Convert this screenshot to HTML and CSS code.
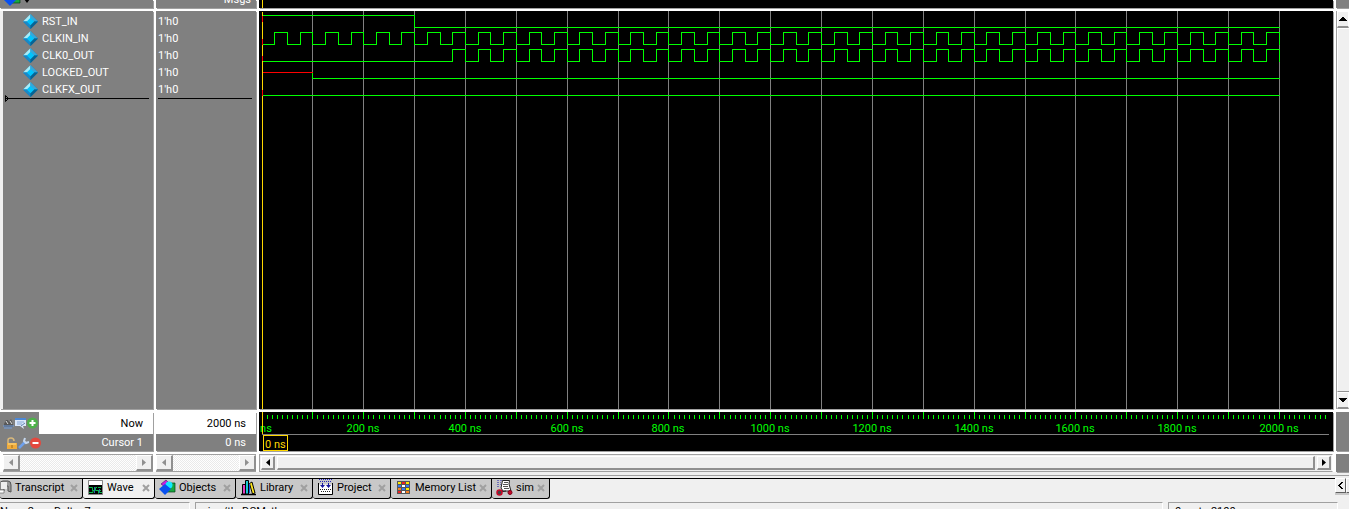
FILE: index.html
```html
<!DOCTYPE html>
<html lang="en">
<head>
<meta charset="utf-8">
<title>Wave</title>
<link rel="stylesheet" href="styles.css">
</head>
<body>
<svg class="defs" aria-hidden="true">
  <symbol id="gem" viewBox="0 0 16 16">
    <path d="M8 0L0 8L8 16L16 8Z" fill="#0b76ae"/>
    <path d="M8 0L0 8L8 8Z" fill="#a8ecf8"/><path d="M8 0L16 8L8 8Z" fill="#35a8da"/>
    <path d="M0 8L8 16L8 8Z" fill="#1889c8"/><path d="M16 8L8 16L8 8Z" fill="#066494"/>
    <path d="M8 4L12 8L8 12L4 8Z" fill="#00c4fc"/>
  </symbol>
  <symbol id="objects" viewBox="0 0 17 17">
    <path d="M2 5L7 1L10 4L6 8Z" fill="#c81ee0" stroke="#402060" stroke-width=".6"/>
    <path d="M9 4H16V13H7Z" fill="#18a840" stroke="#064018" stroke-width=".7"/>
    <circle cx="10" cy="6" r="3.500" fill="#10e8ff"/><path d="M6 5L12 10L6 16L0 10Z" fill="#0850f0"/>
  </symbol>
</svg>
<main class="app">
  <section class="wave-window" aria-label="Wave">
    <div class="cell head head-names">
      <svg class="icon17"><use href="#objects"/></svg>
      <svg class="caret" viewBox="0 0 6 4"><path d="M0 0H6L3 4Z"/></svg>
    </div>
    <div class="cell head head-msgs">Msgs</div>
    <div class="cell black head"><svg class="plot"><path class="cursor" d="M3 0V8"/></svg></div>
    <div class="cell head"></div>

    <div class="cell names">
      <ul class="signals">
        <li><svg class="gem"><use href="#gem"/></svg>RST_IN</li>
        <li><svg class="gem"><use href="#gem"/></svg>CLKIN_IN</li>
        <li><svg class="gem"><use href="#gem"/></svg>CLK0_OUT</li>
        <li><svg class="gem"><use href="#gem"/></svg>LOCKED_OUT</li>
        <li><svg class="gem"><use href="#gem"/></svg>CLKFX_OUT</li>
      </ul>
      <div class="insert"><svg viewBox="0 0 4 7"><path d="M.5 .5L3.500 3.500L.5 6.500Z" fill="none" stroke="#000"/></svg></div>
    </div>
    <div class="cell values">
      <ul class="signals"><li>1'h0</li><li>1'h0</li><li>1'h0</li><li>1'h0</li><li>1'h0</li></ul>
      <div class="insert"></div>
    </div>
    <div class="cell black"><svg class="plot" id="waves" role="img" aria-label="Waveforms"></svg></div>
    <div class="vscroll">
      <button aria-label="Scroll up"><svg viewBox="0 0 8 4"><path d="M3 0H5V1H6V2H7V3H8V4H0V3H1V2H2V1H3Z"/></svg></button>
      <div class="vtrack"></div>
      <button aria-label="Scroll down"><svg viewBox="0 0 8 4"><path d="M0 0H8V1H7V2H6V3H5V4H3V3H2V2H1V1H0Z"/></svg></button>
    </div>

    <div class="cell info">
      <div class="now">
        <div class="tools">
          <svg viewBox="0 0 11 12"><path d="M1 7L3 3H5L6 5L8 2L10 7V10H1Z" fill="#585858"/><path d="M0 9H11M1 11H9" stroke="#6f9de0"/><path d="M3 4L5 7M7 4L9 7" stroke="#ddd"/></svg>
          <svg viewBox="0 0 11 12"><path d="M0 1H11V9H8L9 12L5 9H0Z" fill="#dce8fa"/><path d="M0 2H11" stroke="#4d88d5" stroke-width="2"/><path d="M2 5H9M2 7H7" stroke="#86a8d8"/><path d="M6 9L10 6" stroke="#607fae"/></svg>
          <svg viewBox="0 0 11 12"><circle cx="5.500" cy="6" r="5.500" fill="#4eb04a"/><path d="M5.500 3V9M2.500 6H8.500" stroke="#fff" stroke-width="2"/></svg>
        </div>
        <span>Now</span>
      </div>
      <div class="curs">
        <div class="tools">
          <svg viewBox="0 0 11 12"><path d="M2 6V3Q2 1 5 1Q8 1 8 4" fill="none" stroke="#d8b87c" stroke-width="1.500"/><path d="M1 6H11V12H1Z" fill="#efac3d"/><path d="M2 7H10" stroke="#ffda86"/><path d="M6 8V11" stroke="#a46910"/></svg>
          <svg viewBox="0 0 11 12"><path d="M1 11L7 5" stroke="#6d9fea" stroke-width="2.500"/><path d="M7 1L6 4L8 6L11 5" fill="none" stroke="#c5d7ee" stroke-width="2"/></svg>
          <svg viewBox="0 0 11 12"><circle cx="5.500" cy="6" r="5.500" fill="#e3483e"/><path d="M2.500 6H8.500" stroke="#fff" stroke-width="2"/></svg>
        </div>
        <span>Cursor 1</span>
      </div>
    </div>
    <div class="cell info"><div class="now"><span>2000 ns</span></div><div class="curs"><span>0 ns</span></div></div>
    <div class="cell black"><svg class="plot" id="ruler" role="img" aria-label="Time ruler"></svg></div>
    <div class="cell"></div>

    <div class="hscroll off pad">
      <button disabled aria-label="Names left"><svg viewBox="0 0 4 7"><path d="M4 0V7L0 3.500Z"/></svg></button><div class="track"></div><button disabled aria-label="Names right"><svg viewBox="0 0 4 7"><path d="M0 0V7L4 3.500Z"/></svg></button>
    </div>
    <div class="hscroll off">
      <button disabled aria-label="Values left"><svg viewBox="0 0 4 7"><path d="M4 0V7L0 3.500Z"/></svg></button><div class="track"></div><button disabled aria-label="Values right"><svg viewBox="0 0 4 7"><path d="M0 0V7L4 3.500Z"/></svg></button>
    </div>
    <div class="hscroll">
      <button aria-label="Wave left"><svg viewBox="0 0 4 7"><path d="M4 0V7L0 3.500Z"/></svg></button><div class="thumb"></div><button aria-label="Wave right"><svg viewBox="0 0 4 7"><path d="M0 0V7L4 3.500Z"/></svg></button>
    </div>
    <div class="cell"></div>
  </section>

  <div class="tabbar">
    <nav class="tabs">
      <div class="tab t-transcript"><svg class="icon17" viewBox="0 0 17 17"><path d="M5 5Q5 2 8 2H13Q16 2 16 6V13L13 12V7H9V12H5Z" fill="#999" stroke="#555"/><path d="M6 3H12V10H6Z" fill="#eee"/><path d="M5 3V12" stroke="#888" stroke-width="2"/><path d="M3 11H9V14H3Z" fill="#fff" stroke="#555" stroke-width=".6"/></svg><button class="name">Transcript</button><button class="x" aria-label="Close Transcript"><svg viewBox="0 0 8 8"><path d="M1 1L7 7M7 1L1 7"/></svg></button></div>
      <div class="tab t-wave on"><svg class="icon17" viewBox="0 0 17 17"><path d="M1.500 1.500H15.500V15.500H1.500Z" fill="#000" stroke="#888"/><path d="M2 2H15V6H2Z" fill="#fff"/><path d="M2 8.500H5.500V11.500H8.500V8.500H10M11 8.500H14M9 11.500H14M2 13.500H6V11.500M9 11.500H11.500V14.500M12 13.500H15" fill="none" stroke="#08b848"/><path d="M7.500 8V14M12.500 10V14" stroke="#2868a8"/></svg><button class="name">Wave</button><button class="x" aria-label="Close Wave"><svg viewBox="0 0 8 8"><path d="M1 1L7 7M7 1L1 7"/></svg></button></div>
      <div class="tab t-objects"><svg class="icon17"><use href="#objects"/></svg><button class="name">Objects</button><button class="x" aria-label="Close Objects"><svg viewBox="0 0 8 8"><path d="M1 1L7 7M7 1L1 7"/></svg></button></div>
      <div class="tab t-library"><svg class="icon17" viewBox="0 0 17 17"><path d="M1 15.500H16" stroke="#000" stroke-width="1.500"/><path d="M2.500 5.500H5.500V15H2.500Z" fill="#e040c0" stroke="#000"/><path d="M5.500 1.500H8.500V15H5.500Z" fill="#18c8d0" stroke="#000"/><path d="M9.500 4.500L12 3L15 14L12.500 15Z" fill="#ffe820" stroke="#000"/><path d="M9.500 5V14" stroke="#2050e0"/></svg><button class="name">Library</button><button class="x" aria-label="Close Library"><svg viewBox="0 0 8 8"><path d="M1 1L7 7M7 1L1 7"/></svg></button></div>
      <div class="tab t-project"><svg class="icon17" viewBox="0 0 17 17"><path d="M2 5.500H15V15H2Z" fill="#fff"/><path d="M2 .5H15M3 2.500H14" stroke="#2828b8" stroke-dasharray="1 1"/><path d="M1.500 4V15.500H15.500V4" fill="none" stroke="#000"/><path d="M3 6H5V4H6V6H8L5.500 9ZM9 6H11V4H12V6H14L11.500 9Z" fill="#18189c"/><path d="M3 10.500H14M4 12.500H13" stroke="#222" stroke-dasharray="1 1"/></svg><button class="name">Project</button><button class="x" aria-label="Close Project"><svg viewBox="0 0 8 8"><path d="M1 1L7 7M7 1L1 7"/></svg></button></div>
      <div class="tab t-memory"><svg class="icon17" viewBox="0 0 17 17"><path d="M2 2H15V15H2Z" fill="#555"/><path d="M3 3H6V5H3ZM11 3H14V5H11ZM11 9H14V11H11Z" fill="#ffe800"/><path d="M7 3H10V5H7ZM3 12H6V14H3Z" fill="#f02020"/><path d="M3 6H6V8H3ZM11 6H14V8H11ZM7 9H10V11H7Z" fill="#3878f0"/><path d="M7 6H10V8H7ZM7 12H10V14H7Z" fill="#fff"/><path d="M3 9H6V11H3ZM11 12H14V14H11Z" fill="#f88020"/></svg><button class="name">Memory List</button><button class="x" aria-label="Close Memory List"><svg viewBox="0 0 8 8"><path d="M1 1L7 7M7 1L1 7"/></svg></button></div>
      <div class="tab t-sim"><svg class="icon17" viewBox="0 0 17 17"><path d="M6.500 1.500H13.500L13 5L15 12H7L5 9Z" fill="#fff" stroke="#222"/><path d="M8 3.500H12M7 5.500H12M7 7.500H12M8 9.500H13" stroke="#555"/><path d="M1 1.500H6M1 3.500H5M1 5.500H5M1 7.500H4" stroke="#7070b8" stroke-dasharray="2 1"/><path d="M4 13L10 12" stroke="#222"/><circle cx="3.500" cy="13.500" r="2.500" fill="#444" stroke="#c80828" stroke-width="1.500"/><circle cx="14" cy="13.500" r="2" fill="#c80828" stroke="#800018"/></svg><button class="name">sim</button><button class="x" aria-label="Close sim"><svg viewBox="0 0 8 8"><path d="M1 1L7 7M7 1L1 7"/></svg></button></div>
    </nav>
    <div class="tabnav">
      <button aria-label="Previous tabs"><svg viewBox="0 0 5 7"><path d="M3 0H5V1H3ZM2 1H4V2H2ZM1 2H3V3H1ZM0 3H2V4H0ZM1 4H3V5H1ZM2 5H4V6H2ZM3 6H5V7H3Z"/></svg></button>
      <button aria-label="Next tabs"></button>
    </div>
  </div>
  <footer class="status">
    <div class="s-now">Now: 2 us&nbsp; Delta: 7</div>
    <div class="s-path">sim:/tb_DCM_tb</div>
    <div class="s-range">0 ns to 2100 ns</div>
  </footer>
</main>
<script src="wave.js"></script>
</body>
</html>
```
FILE: styles.css
```css
* { box-sizing: border-box; }
body { margin: 0; background: #f0f0f0; color: #000; font: 11px/17px Tahoma, Roboto, "Noto Sans", sans-serif; }
button { font: inherit; color: inherit; padding: 0; border: 0; background: none; }
ul { margin: 0; padding: 0; list-style: none; }
svg { display: block; }
.defs { width: 0; height: 0; position: absolute; }
.app { height: 100vh; display: flex; flex-direction: column; overflow: hidden; }

.wave-window {
  flex: 1; min-height: 0; display: grid; gap: 3px; background: #fff;
  grid-template-columns: 153px 100px minmax(0, 1fr) 13px;
  grid-template-rows: 8px minmax(0, 1fr) 39px 18px;
}
.cell { background: #808080; box-shadow: 1px 1px 0 #a0a0a0; overflow: hidden; color: #fff; min-height: 0; }
.black { background: #000; }
.plot { width: 100%; height: 100%; shape-rendering: crispEdges; }
.head { display: flex; align-items: flex-end; }
.head-names { gap: 3px; padding-left: 4px; }
.head-names .icon17 { margin-bottom: 1px; }
.caret { width: 6px; height: 4px; margin-bottom: 5px; }
.head-msgs { justify-content: flex-end; padding-right: 5px; }

.signals { padding-top: 2px; }
.signals li { height: 17px; display: flex; align-items: center; gap: 4px; white-space: nowrap; }
.names { border-left: 3px solid #f0f0f0; }
.names li { padding-left: 20px; }
.gem { width: 15px; height: 15px; }
.values li { padding-left: 2px; }
.insert { display: flex; align-items: center; height: 7px; margin: -3px 4px 0 2px; background: linear-gradient(#000, #000) 0 3px / 100% 1px no-repeat; }
.insert svg { width: 4px; height: 7px; }

.vscroll { display: flex; flex-direction: column; background: #f0f0f0; border-left: 1px solid #a0a0a0; min-height: 0; }
.vscroll button { height: 17px; flex: none; display: grid; place-items: center; border: 1px solid #fff; border-bottom: 2px solid #909090; }
.vscroll button svg { width: 8px; height: 4px; }
.vtrack { flex: 1; border-left: 1px solid #fff; border-top: 1px solid #fff; border-bottom: 1px solid #909090; }

.info { color: #fff; }
.now { height: 22px; background: #fff; color: #000; }
.curs { height: 17px; }
.now, .curs { display: flex; align-items: center; justify-content: space-between; padding-right: 10px; white-space: nowrap; }
.now span, .curs span { margin-left: auto; }
.tools { display: flex; align-items: center; gap: 1px; height: 100%; padding: 0 1px 0 3px; background: #808080; }
.curs .tools { padding-left: 6px; }
.tools svg { width: 11px; height: 12px; }

.hscroll { display: flex; gap: 2px; padding: 1px; background: #f0f0f0; border: 1px solid #a0a0a0; border-right-color: #fff; }
.hscroll button { width: 14px; flex: none; display: grid; place-items: center; }
.hscroll button, .thumb { background: #f0f0f0; border: 1px solid #fff; border-right: 2px solid #909090; border-bottom: 2px solid #909090; }
.hscroll button svg { width: 4px; height: 7px; }
.thumb, .track { flex: 1; }
.track { background: repeating-conic-gradient(#fff 0 25%, #eaeaea 0 50%) 0 0 / 2px 2px; }
.hscroll.off { gap: 0; padding: 0; border-left: 0; border-right: 0; }
.off svg { fill: #909090; }
.hscroll.off button { width: 17px; }
.pad { margin-left: 3px; }

.tabbar { display: flex; justify-content: space-between; height: 27px; flex: none; margin-top: 3px; border-top: 1px solid #a0a0a0; }
.tabs { flex: 1; display: flex; border-top: 1px solid #000; margin-top: 2px; overflow: hidden; }
.tab { display: flex; align-items: center; height: 20px; background: #c8c8c8; border: solid #000; border-width: 0 1px 1px 0; border-radius: 0 0 3px 3px; padding: 0 4px 2px; }
.tab .name { margin: 0 auto 0 3px; white-space: nowrap; }
.on { background: #f0f0f0; }
.icon17 { width: 17px; height: 17px; flex: none; }
.x, .x svg { width: 8px; height: 8px; }
.x path { stroke: #a0a0a0; stroke-width: 2; }
.tab.t-transcript { width: 83px; padding-left: 0; }
.t-transcript .icon17 { margin-left: -5px; }
.t-wave { width: 72px; }
.t-objects { width: 81px; }
.t-library { width: 77px; }
.t-project { width: 78px; }
.t-memory { width: 101px; }
.t-sim { width: 58px; }
.tabnav { width: 14px; height: 17px; flex: none; display: flex; background: #c8c8c8; margin-top: 2px; overflow: hidden; }
.tabnav button { width: 11px; height: 15px; flex: none; display: grid; place-items: center; background: #f0f0f0; border: 1px solid #fff; border-right-color: #606060; border-bottom-color: #606060; }
.tabnav svg { width: 5px; height: 7px; }

.status { display: flex; gap: 5px; height: 7px; flex: none; white-space: nowrap; line-height: 12px; }
.status div { border-top: 1px solid #a0a0a0; border-left: 1px solid #a0a0a0; border-right: 1px solid #fff; padding: 3px 6px 0; overflow: hidden; }
.status .s-now { width: 190px; border-left: 0; padding-left: 0; }
.s-path { flex: 1; }
.s-range { width: 170px; margin-right: 11px; }

.cursor { stroke: #ffd800; fill: none; transform: translate(.5px, 0); }
.grid { stroke: #808080; }
.hi { stroke: #0f0; fill: none; }
.unknown { stroke: #f00; fill: none; }
.tick { fill: #0f0; text-anchor: middle; }
.stamp { fill: #ffd800; }
```
FILE: wave.js
```js
const NS = "http://www.w3.org/2000/svg";
const ORIGIN = 3;
const END = 2000;
const px = t => Math.floor(ORIGIN + t * 0.5087) + 0.5;

function add(svg, name, attrs, text) {
  const el = document.createElementNS(NS, name);
  for (const key in attrs) el.setAttribute(key, attrs[key]);
  if (text) el.textContent = text;
  svg.appendChild(el);
}

// One pulse every 50 ns, high for 25 ns, starting at the first rising edge.
function clock(first, low, high) {
  let d = `M${px(0)} ${low}`;
  for (let t = first; t < END; t += 50) d += `H${px(t)}V${high}H${px(t + 25)}V${low}`;
  return d + `H${px(END)}`;
}

const waves = document.getElementById("waves");
for (let t = 100; t <= END; t += 100) add(waves, "path", { class: "grid", d: `M${px(t)} 0V2000` });
add(waves, "path", { class: "cursor", d: "M3 1V2000" });
add(waves, "path", { class: "unknown", d: "M3.5 5V11M3.5 28V34M3.5 45V50M3.5 79V85" });
add(waves, "path", { class: "hi", d: `M4 4.5H${px(300)}V16.5H${px(END)}` });
add(waves, "path", { class: "hi", d: clock(25, 33.5, 21.5) });
add(waves, "path", { class: "hi", d: clock(375, 50.5, 38.5) });
add(waves, "path", { class: "hi", d: `M${px(100)} 61V67.5H${px(END)}` });
add(waves, "path", { class: "unknown", d: `M4 61.5H${px(100)}` });
add(waves, "path", { class: "hi", d: `M4 84.5H${px(END)}` });

const ruler = document.getElementById("ruler");
for (let t = 10; t <= 2090; t += 10) add(ruler, "path", { class: "hi", d: `M${px(t)} ${t % 100 ? 3 : 0}V7` });
for (let t = 200; t <= END; t += 200) add(ruler, "text", { class: "tick", x: Math.floor(px(t)), y: 20 }, `${t} ns`);
add(ruler, "text", { class: "tick", x: 7, y: 20 }, "ns");
add(ruler, "path", { class: "grid", d: "M3 22.5H1070" });
add(ruler, "path", { class: "cursor", d: "M3 0V22" });
add(ruler, "path", { class: "cursor", d: "M4 23.5H28V38.5H4Z" });
add(ruler, "text", { class: "stamp", x: 6, y: 36 }, "0 ns");
```
